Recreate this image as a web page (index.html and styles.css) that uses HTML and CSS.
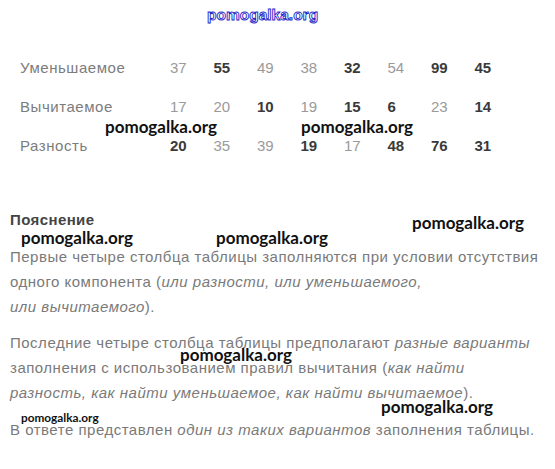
FILE: index.html
```html
<!DOCTYPE html>
<html lang="ru">
<head>
<meta charset="utf-8">
<title>Разность</title>
<link rel="stylesheet" href="styles.css">
</head>
<body>
<div class="page">
  <div class="brand"><span class="brand-text">pomogalka.org</span></div>

  <div class="table">
    <div class="label">Уменьшаемое</div>
    <div class="n">37</div><div class="n b">55</div><div class="n">49</div><div class="n">38</div>
    <div class="n b">32</div><div class="n">54</div><div class="n b">99</div><div class="n b">45</div>

    <div class="label">Вычитаемое</div>
    <div class="n">17</div><div class="n">20</div><div class="n b">10</div><div class="n">19</div>
    <div class="n b">15</div><div class="n b">6</div><div class="n">23</div><div class="n b">14</div>

    <div class="label">Разность</div>
    <div class="n b">20</div><div class="n">35</div><div class="n">39</div><div class="n b">19</div>
    <div class="n">17</div><div class="n b">48</div><div class="n b">76</div><div class="n b">31</div>
  </div>

  <h3 class="title">Пояснение</h3>
  <p class="text">Первые четыре столбца таблицы заполняются при условии отсутствия<br>одного компонента (<em>или разности, или уменьшаемого,<br>или вычитаемого</em>).</p>
  <p class="text">Последние четыре столбца таблицы предполагают <em>разные варианты</em><br>заполнения с использованием правил вычитания (<em>как найти<br>разность, как найти уменьшаемое, как найти вычитаемое</em>).</p>
  <p class="text">В ответе представлен <em>один из таких вариантов</em> заполнения таблицы.</p>

  <span class="wm" style="left:105px;top:118px">pomogalka.org</span>
  <span class="wm" style="left:301px;top:118px">pomogalka.org</span>
  <span class="wm" style="left:412px;top:214px">pomogalka.org</span>
  <span class="wm" style="left:21px;top:229px">pomogalka.org</span>
  <span class="wm" style="left:216px;top:229px">pomogalka.org</span>
  <span class="wm" style="left:180px;top:346px">pomogalka.org</span>
  <span class="wm" style="left:381px;top:398px">pomogalka.org</span>
  <span class="wm wm-small" style="left:21px;top:411.5px">pomogalka.org</span>
</div>
</body>
</html>
```

FILE: styles.css
```css
html, body {
  margin: 0;
  padding: 0;
  background: #ffffff;
}

.page {
  position: relative;
  width: 555px;
  height: 469px;
  overflow: hidden;
  font-family: "Liberation Sans", Arial, sans-serif;
  font-size: 15px;
  color: #777777;
}

.brand {
  height: 26px;
  padding-left: 207px;
  display: flex;
  align-items: flex-end;
}

.brand-text {
  font-family: "Liberation Sans", Arial, sans-serif;
  font-weight: bold;
  font-size: 15.5px;
  line-height: 22px;
  color: #ffffff;
  -webkit-text-stroke: 0.9px #2626c8;
}

.table {
  margin-top: 21.5px;
  margin-left: 20px;
  display: grid;
  grid-template-columns: 150px repeat(8, 43.5px);
  grid-auto-rows: 39px;
  line-height: 39px;
}

.label {
  color: #7c7c7c;
  letter-spacing: 0.55px;
}

.n {
  color: #9a9a9a;
}

.n.b {
  color: #3a3a3a;
  font-weight: bold;
}

.title {
  margin: 45.5px 0 0 10px;
  font-size: 15px;
  line-height: 20px;
  font-weight: bold;
  color: #444444;
  letter-spacing: 0.4px;
}

.text {
  margin: 13.5px 0 0 10px;
  line-height: 25px;
  white-space: nowrap;
  color: #7a7a7a;
  letter-spacing: 0.5px;
}

.text + .text {
  margin-top: 11.5px;
}

.text em {
  font-style: italic;
}

.wm {
  position: absolute;
  font-family: Lato, "Open Sans", sans-serif;
  font-weight: 700;
  font-size: 17px;
  line-height: 17px;
  color: #111111;
  white-space: nowrap;
}

.wm-small {
  font-size: 11.8px;
  line-height: 11.8px;
}
```
